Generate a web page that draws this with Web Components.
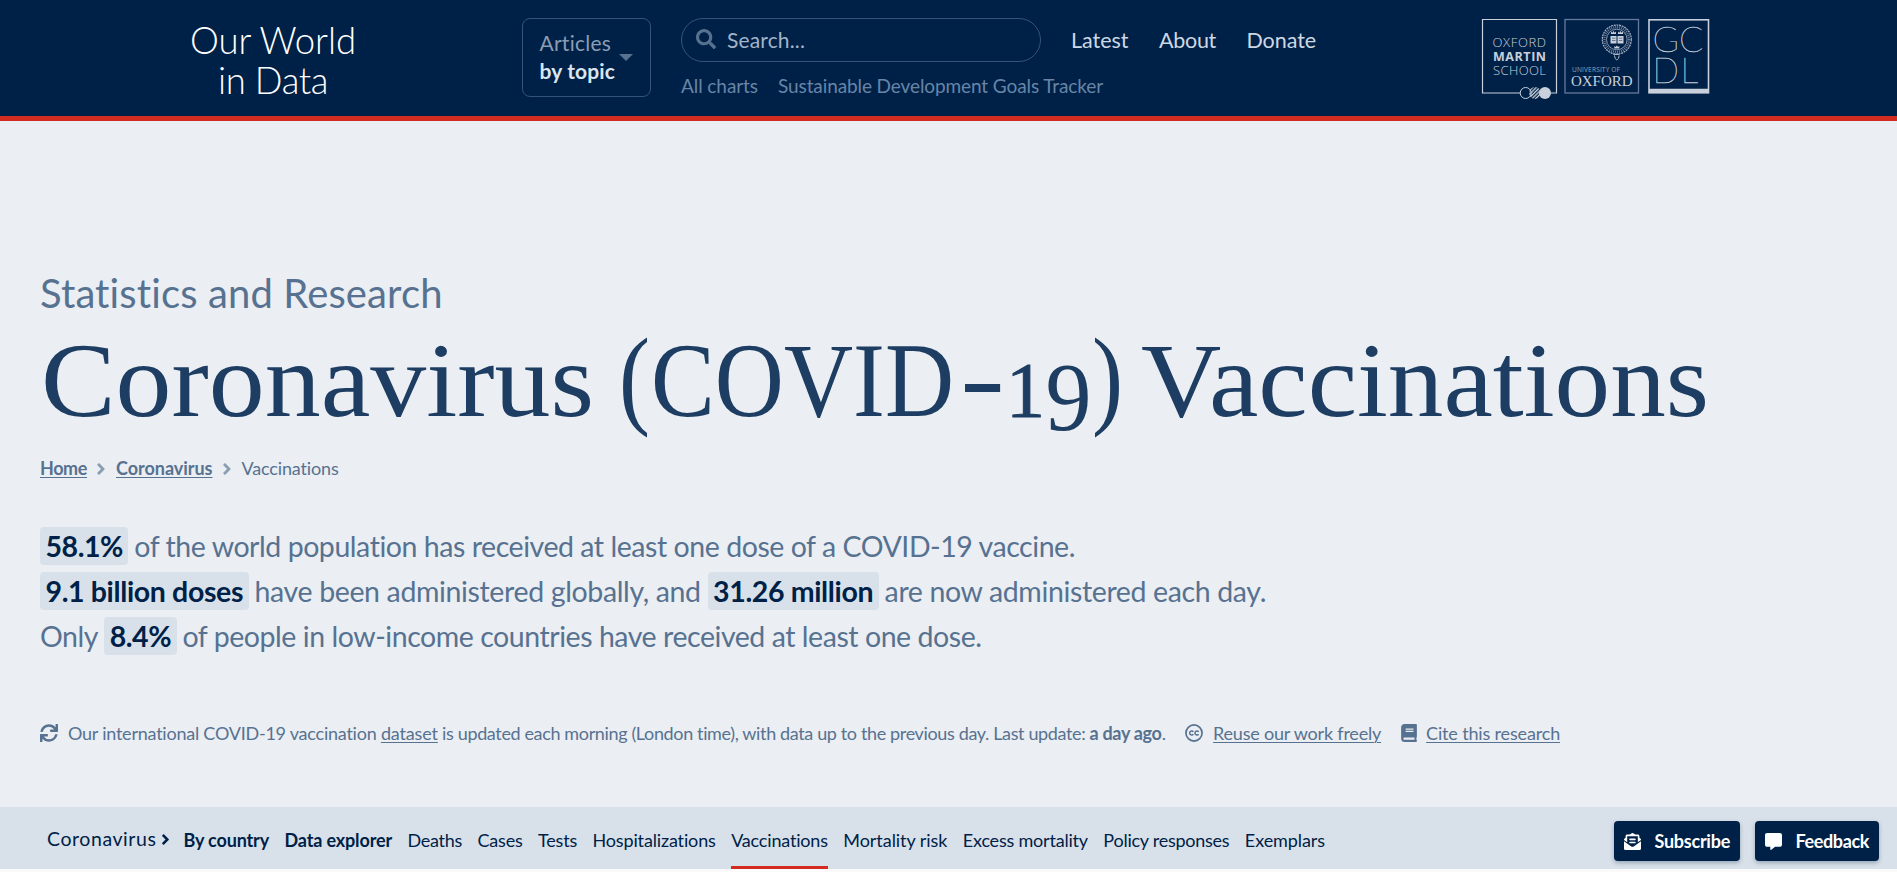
<!DOCTYPE html>
<html lang="en">
<head>
<meta charset="utf-8">
<title>Coronavirus (COVID-19) Vaccinations - Our World in Data</title>
<style>
html,body{margin:0;padding:0;height:872px;overflow:hidden;background:#fafafa}
body{font-family:Lato,"Liberation Sans",sans-serif;font-size:18px;color:#577291}
</style>
</head>
<body>
<owid-page></owid-page>
<script>
const ICONS = {
  search: ['0 0 512 512','<path d="M505 442.7L405.3 343c-4.5-4.5-10.6-7-17-7H372c27.6-35.3 44-79.7 44-128C416 93.1 322.9 0 208 0S0 93.1 0 208s93.1 208 208 208c48.3 0 92.7-16.4 128-44v16.3c0 6.4 2.5 12.5 7 17l99.7 99.7c9.4 9.4 24.6 9.4 33.9 0l28.3-28.3c9.4-9.4 9.4-24.6.1-34zM208 336c-70.7 0-128-57.2-128-128 0-70.7 57.2-128 128-128 70.7 0 128 57.2 128 128 0 70.7-57.2 128-128 128z"/>'],
  sync: ['0 0 512 512','<path d="M440.65 12.57l4 82.77A247.16 247.16 0 0 0 255.83 8C134.73 8 33.91 94.92 12.29 209.82A12 12 0 0 0 24.09 224h49.05a12 12 0 0 0 11.67-9.26 175.91 175.91 0 0 1 317-56.94l-101.46-4.86a12 12 0 0 0-12.57 12v47.41a12 12 0 0 0 12 12H500a12 12 0 0 0 12-12V12a12 12 0 0 0-12-12h-47.37a12 12 0 0 0-11.98 12.57zM255.83 432a175.61 175.61 0 0 1-146-77.8l101.8 4.87a12 12 0 0 0 12.57-12v-47.4a12 12 0 0 0-12-12H12a12 12 0 0 0-12 12V500a12 12 0 0 0 12 12h47.35a12 12 0 0 0 12-12.6l-4.15-82.57A247.17 247.17 0 0 0 255.83 504c121.11 0 221.93-86.92 243.55-201.82a12 12 0 0 0-11.8-14.18h-49.05a12 12 0 0 0-11.67 9.26A175.86 175.86 0 0 1 255.83 432z"/>'],
  angle: ['26 90 204 332','<path d="M224.3 273l-136 136c-9.4 9.4-24.6 9.4-33.9 0l-22.6-22.6c-9.4-9.4-9.4-24.6 0-33.9l96.4-96.4-96.4-96.4c-9.4-9.4-9.4-24.6 0-33.9L54.3 103c9.4-9.4 24.6-9.4 33.9 0l136 136c9.5 9.4 9.5 24.6.1 34z"/>'],
  book: ['0 0 448 512','<path fill-rule="evenodd" d="M448 360V24c0-13.3-10.7-24-24-24H96C43 0 0 43 0 96v320c0 53 43 96 96 96h328c13.3 0 24-10.7 24-24v-16c0-7.5-3.5-14.3-8.9-18.7-4.2-15.4-4.2-59.3 0-74.7 5.4-4.3 8.9-11.1 8.9-18.6zM128 134c0-3.3 2.7-6 6-6h212c3.3 0 6 2.7 6 6v20c0 3.3-2.7 6-6 6H134c-3.3 0-6-2.7-6-6v-20zm0 64c0-3.3 2.7-6 6-6h212c3.3 0 6 2.7 6 6v20c0 3.3-2.7 6-6 6H134c-3.3 0-6-2.7-6-6v-20zm253.4 250H96c-17.7 0-32-14.3-32-32 0-17.6 14.4-32 32-32h285.4c-1.9 17.1-1.9 46.9 0 64z"/>'],
  cc: ['0 0 18 18','<g fill="none" stroke="currentColor"><circle cx="9" cy="9" r="8.05" stroke-width="1.7"/><path stroke-width="1.5" d="M8.3 7.9a2 2 0 1 0 0 2.3M13.6 7.9a2 2 0 1 0 0 2.3"/></g>'],
  mail: ['0 0 512 512','<path fill-rule="evenodd" d="M176 216h160c8.8 0 16-7.2 16-16v-16c0-8.800-7.200-16-16-16H176c-8.800 0-16 7.200-16 16v16c0 8.800 7.200 16 16 16zm-16 80c0 8.800 7.200 16 16 16h160c8.800 0 16-7.200 16-16v-16c0-8.800-7.200-16-16-16H176c-8.800 0-16 7.200-16 16v16zm96 121.100c-16.400 0-32.800-5.100-46.900-15.200L0 250.900V464c0 26.500 21.500 48 48 48h416c26.500 0 48-21.500 48-48V250.900L302.900 401.900c-14 10.100-30.400 15.200-46.900 15.200zm237.600-254.200c-8.900-6.900-17.200-13.500-29.600-22.800V96c0-26.500-21.500-48-48-48h-77.600c-3-2.200-5.900-4.300-9-6.600C312.600 29.200 279.200-.3 256 0c-23.200-.3-56.600 29.200-73.400 41.400-3.200 2.300-6 4.400-9 6.600H96c-26.500 0-48 21.500-48 48v44.100c-12.400 9.300-20.700 15.900-29.600 22.800A48 48 0 0 0 0 200.700v10.700l96 69.300V96h320v184.700l96-69.300v-10.700c0-14.700-6.800-28.700-18.400-37.800z"/>'],
  chat: ['0 0 512 512','<path d="M448 0H64C28.700 0 0 28.700 0 64v288c0 35.300 28.700 64 64 64h96v84c0 9.800 11.200 15.500 19.100 9.700L304 416h144c35.300 0 64-28.700 64-64V64c0-35.300-28.700-64-64-64z"/>']
};

/* <owid-icon name> : a glyph that fills its host box */
class OwidIcon extends HTMLElement{
  constructor(){super();this.attachShadow({mode:'open'});}
  connectedCallback(){
    const [box,art]=ICONS[this.getAttribute('name')];
    this.shadowRoot.innerHTML=`<style>:host{display:block;flex:none}svg{display:block;width:100%;height:100%}</style><svg viewBox="${box}" fill="currentColor" aria-hidden="true">${art}</svg>`;
  }
}

/* <fit-text width> : one line of text, tracked so that it takes the given width */
class FitText extends HTMLElement{
  constructor(){super();this.attachShadow({mode:'open'}).innerHTML='<style>:host{display:inline-block;white-space:pre;flex:none}</style><slot></slot>';}
  connectedCallback(){
    const target=+this.getAttribute('width');
    const now=this.getBoundingClientRect().width;
    this.style.letterSpacing=((target-now)/this.textContent.length).toFixed(4)+'px';
  }
}

const define=(name,html)=>{
  const t=document.createElement('template');t.innerHTML=html;
  customElements.define(name,class extends HTMLElement{
    constructor(){super();this.attachShadow({mode:'open'}).append(t.content.cloneNode(true));}
  });
};

define('owid-page',`<style>:host{display:block;height:872px}</style><owid-header></owid-header><owid-hero></owid-hero><owid-subnav></owid-subnav>`);

define('owid-header',`<style>
:host{display:flex;box-sizing:border-box;height:121px;background:#002147;border-bottom:5px solid #d42b21;padding-left:190px;align-items:flex-start}
a{color:inherit;text-decoration:none}
.logo{width:166px;margin-top:20px;font-size:36.500px;line-height:40px;font-weight:300;color:#fff;text-align:center}
.topic{box-sizing:border-box;width:129px;height:79px;margin:18px 0 0 166px;border:1px solid #35527a;border-radius:8px;padding:10px 17px 0 16.500px;display:flex;justify-content:space-between;font-size:21px;line-height:28px;color:#8b9db3}
.topic b{display:block;color:#dbe5f0;font-weight:700}
.caret{border:7.5px solid transparent;border-top:7px solid #577291;border-bottom:0;height:0;margin:25px 0 0 -12px}
.mid{margin:18px 0 0 30px;width:360px}
.search{box-sizing:border-box;height:44px;border:1px solid #35527a;border-radius:22px;display:flex;align-items:center;padding-left:14px;color:#a1b4c9;font-size:21px}
.search owid-icon{width:20px;height:20px;color:#577291;margin:-2px 11px 0 0}
.search fit-text{margin-top:-1px}
.sub{display:flex;gap:20px;margin-top:11px;font-size:19px;line-height:26px;color:#6785a8;white-space:nowrap}
nav{display:flex;gap:30.500px;margin:26px 0 0 30px;font-size:21.500px;line-height:28px;color:#ced8e4}
owid-partners{margin:18px 0 0 165px}
</style>
<a class="logo"><fit-text width="166">Our World</fit-text><br><fit-text width="110">in Data</fit-text></a>
<div class="topic"><div><fit-text width="72">Articles</fit-text><b><fit-text width="75.500">by topic</fit-text></b></div><i class="caret"></i></div>
<div class="mid"><div class="search"><owid-icon name="search"></owid-icon><fit-text width="78">Search...</fit-text></div>
<div class="sub"><fit-text width="77">All charts</fit-text><fit-text width="325">Sustainable Development Goals Tracker</fit-text></div></div>
<nav><fit-text width="57.500">Latest</fit-text><fit-text width="57">About</fit-text><fit-text width="69.500">Donate</fit-text></nav>
<owid-partners></owid-partners>`);

define('owid-partners',`<style>:host{display:flex;color:#c9d0db}svg{display:block}text{fill:currentColor}</style>
<svg width="230" height="84" viewBox="1481 18 230 84" fill="none" stroke="none">
<defs><pattern id="hatch" width="2.500" height="2.500" patternUnits="userSpaceOnUse" patternTransform="rotate(-45)"><rect width="2.500" height="1.300" fill="#c9d0db"/></pattern></defs>
<path d="M1520 93H1482.500V19.500H1556.500V93H1551" stroke="#c9d0db" stroke-width="1.200"/>
<circle cx="1525.700" cy="93" r="5.500" stroke="#c9d0db"/><circle cx="1535" cy="93" r="6" fill="url(#hatch)"/><circle cx="1545" cy="93" r="6" fill="#c9d0db"/>
<g font-family="Open Sans" font-size="13"><text x="1492.500" y="46.500" font-weight="300" textLength="53.500">OXFORD</text><text x="1493" y="61" font-weight="700" font-size="12.500" textLength="53">MARTIN</text><text x="1493" y="75" font-weight="300" textLength="53">SCHOOL</text></g>
<rect x="1565" y="19.500" width="73.500" height="73.500" stroke="#66799a" stroke-width="1.300"/>
<g stroke="#a9b4c4" stroke-width="1"><circle cx="1616.800" cy="39.500" r="14.500" stroke-width="1.200" stroke-dasharray="2 .7"/><circle cx="1616.800" cy="39.500" r="12.300" stroke="#6d809d" stroke-width="2.400" stroke-dasharray="1 1"/><circle cx="1616.800" cy="39.500" r="10.300" stroke-width=".8"/>
<path d="M1613.500 54.500h6M1614.500 55.500q0 3.500 2.300 4.500q2.300-1 2.300-4.500" /></g>
<path d="M1610.500 36h6v7.500h-6zM1617.500 36h6v7.500h-6z" fill="#c9d0db"/><path d="M1612 38.200h3.500M1612 40.500h3.500M1618.800 38.200h3.500M1618.800 40.500h3.500" stroke="#4b6282" stroke-width=".8"/>
<path d="M1611 34v-2.500l1.300 1.200 1.200-1.700 1.200 1.700 1.300-1.200V34zM1618 34v-2.500l1.300 1.200 1.200-1.700 1.200 1.700 1.300-1.200V34zM1614.300 48.500V46l1.300 1 1.200-1.500 1.200 1.500 1.300-1v2.500z" fill="#c9d0db"/>
<text x="1572" y="72.300" font-family="Open Sans" font-size="6.600" textLength="48" style="fill:#94a3b7">UNIVERSITY OF</text>
<text x="1571" y="85.500" font-family="Liberation Serif" font-size="14.800" textLength="61.500" lengthAdjust="spacingAndGlyphs">OXFORD</text>
<rect x="1649" y="19.800" width="59.500" height="73" stroke="#c9d0db" stroke-width="1.600"/><path d="M1649 88.800h59.500v4h-59.500z" fill="#c9d0db"/>
<g font-family="Lato" font-size="35.500" font-weight="100" stroke="#c9d0db" stroke-width=".35"><text x="1652.500" y="51.500" textLength="51" lengthAdjust="spacingAndGlyphs">GC</text><text x="1652.500" y="83" textLength="26.500" lengthAdjust="spacingAndGlyphs">D</text><text x="1680.500" y="83">L</text></g>
</svg>`);

define('stat-value',`<style>:host{display:inline-block;box-sizing:border-box;height:38px;line-height:38px;padding:0 5.500px;margin-right:-1px;border-radius:4px;background:#d8e1ea;color:#002147;font-weight:700}</style><slot></slot>`);

define('page-title',`<style>:host{display:block;height:134px}h1{margin:0;font-weight:400}svg{display:block}text{font-family:"Liberation Serif",serif;font-size:106px;fill:#1d3d63}</style>
<h1><svg width="1700" height="134" viewBox="40 316 1700 134">
<text x="41" y="416" textLength="553" lengthAdjust="spacingAndGlyphs">Coronavirus</text>
<text x="619" y="414" style="font-size:111px" textLength="31" lengthAdjust="spacingAndGlyphs">(</text><text x="651" y="416" textLength="303" lengthAdjust="spacingAndGlyphs">COVID</text><text x="960" y="413" textLength="45" lengthAdjust="spacingAndGlyphs">-</text><text x="1006" y="416" style="font-size:79px;stroke:#1d3d63;stroke-width:1px" textLength="39" lengthAdjust="spacingAndGlyphs">1</text><text x="1045.500" y="430" style="font-size:98px" textLength="46" lengthAdjust="spacingAndGlyphs">9</text><text x="1092" y="414" style="font-size:111px" textLength="31" lengthAdjust="spacingAndGlyphs">)</text>
<text x="1141" y="416" textLength="568" lengthAdjust="spacingAndGlyphs">Vaccinations</text>
</svg></h1>`);

define('owid-hero',`<style>
:host{display:block;box-sizing:border-box;height:686px;background:#ebeef2;padding:148px 40px 0;color:#577291}
.kicker{font-size:40px;line-height:48px;height:47px}
.crumbs{display:flex;align-items:center;margin-top:4px;height:28px;line-height:28px;font-size:18px}
.crumbs owid-icon{width:8px;height:12px;color:#8b9db3;margin:2px 11px 0 10px}
u{text-underline-offset:2px;text-decoration-thickness:1px}
.stats{margin-top:42px;font-size:28.500px}.stats div{height:45px;line-height:45px}
.info{display:flex;align-items:center;margin-top:60px;height:28px;line-height:28px;font-size:18px}
.info owid-icon{width:18px;height:18px;margin-right:10px}
</style>
<div class="kicker"><fit-text width="404">Statistics and Research</fit-text></div>
<page-title></page-title>
<div class="crumbs"><b><fit-text width="47"><u>Home</u></fit-text></b><owid-icon name="angle"></owid-icon><b><fit-text width="96.500"><u>Coronavirus</u></fit-text></b><owid-icon name="angle"></owid-icon><fit-text width="97.500">Vaccinations</fit-text></div>
<div class="stats">
<div><fit-text width="1035.500"><stat-value>58.1%</stat-value> of the world population has received at least one dose of a COVID-19 vaccine.</fit-text></div>
<div><fit-text width="1226"><stat-value>9.1 billion doses</stat-value> have been administered globally, and <stat-value>31.26 million</stat-value> are now administered each day.</fit-text></div>
<div><fit-text width="941.500">Only <stat-value>8.4%</stat-value> of people in low-income countries have received at least one dose.</fit-text></div>
</div>
<div class="info"><owid-icon name="sync"></owid-icon><fit-text width="313.500">Our international COVID-19 vaccination </fit-text><fit-text width="57"><u>dataset</u></fit-text><fit-text width="652">&#32;is updated each morning (London time), with data up to the previous day. Last update: </fit-text><fit-text width="76"><b>a day ago</b>.</fit-text>
<owid-icon name="cc" style="margin-left:19.500px"></owid-icon><fit-text width="168"><u>Reuse our work freely</u></fit-text>
<owid-icon name="book" style="margin-left:20px;width:16px;margin-right:9px"></owid-icon><fit-text width="134"><u>Cite this research</u></fit-text></div>`);

define('nav-button',`<style>:host{display:flex;box-sizing:border-box;height:40px;align-items:center;padding:0 10px;background:#002147;color:#fff;border-radius:4px;box-shadow:0 2px 4px rgba(0,33,71,.3);font-weight:700;font-size:18px}</style><slot></slot>`);

define('owid-subnav',`<style>
:host{display:flex;height:62px;background:#d8e1ea;color:#002147;padding-left:47px;font-size:18px}
.item{box-sizing:border-box;height:62px;line-height:62px;padding-top:2px;margin-right:15.500px}
.root{font-size:19.500px;display:flex;align-items:center;margin-right:15px}
.root owid-icon{width:7px;height:11px;margin-left:5px}
.on{border-bottom:3px solid #d42b21}
.cta{display:flex;gap:15px;margin:14px 18px 0 auto}
owid-icon[name=mail],owid-icon[name=chat]{width:17px;height:17px;margin-right:13.500px}
</style>
<div class="item root"><fit-text width="109.500">Coronavirus</fit-text><owid-icon name="angle"></owid-icon></div>
<b class="item"><fit-text width="85.500">By country</fit-text></b>
<b class="item"><fit-text width="107.500">Data explorer</fit-text></b>
<div class="item"><fit-text width="54.500">Deaths</fit-text></div>
<div class="item"><fit-text width="45">Cases</fit-text></div>
<div class="item"><fit-text width="39">Tests</fit-text></div>
<div class="item"><fit-text width="123.500">Hospitalizations</fit-text></div>
<div class="item on"><fit-text width="97">Vaccinations</fit-text></div>
<div class="item"><fit-text width="104">Mortality risk</fit-text></div>
<div class="item"><fit-text width="125">Excess mortality</fit-text></div>
<div class="item"><fit-text width="126">Policy responses</fit-text></div>
<div class="item"><fit-text width="80">Exemplars</fit-text></div>
<div class="cta"><nav-button><owid-icon name="mail"></owid-icon><fit-text width="75.500">Subscribe</fit-text></nav-button><nav-button><owid-icon name="chat"></owid-icon><fit-text width="73.500">Feedback</fit-text></nav-button></div>`);

customElements.define('owid-icon',OwidIcon);
customElements.define('fit-text',FitText);
</script>
</body>
</html>
